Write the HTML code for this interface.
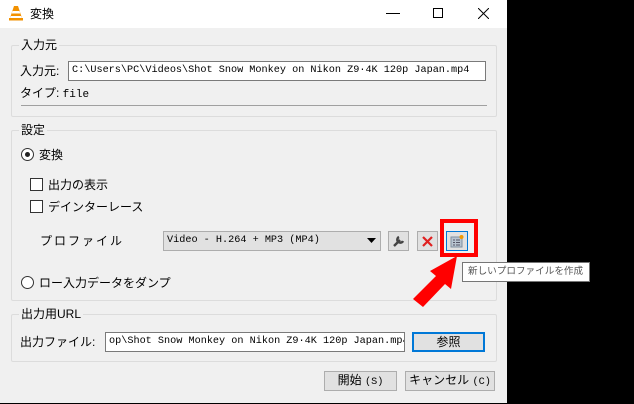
<!DOCTYPE html>
<html><head><meta charset="utf-8"><style>
*{box-sizing:border-box;margin:0;padding:0}
body{width:634px;height:404px;background:#000;position:relative;overflow:hidden;font-family:"Liberation Sans","Noto Sans CJK JP",sans-serif;font-size:12px;color:#000}
.win{position:absolute;left:0;top:0;width:507px;height:403px;background:#f0f0f0}
.title{position:absolute;left:0;top:0;width:507px;height:28px;background:#fff}
.a{position:absolute;white-space:nowrap;line-height:14px}
.grp{position:absolute;border:1px solid #dcdcdc;border-radius:2px}
.gl{position:absolute;background:#f0f0f0;padding:0 2px;line-height:14px}
.mono{font-family:"Liberation Mono","Noto Sans CJK JP",monospace;font-size:10.2px}
.field{position:absolute;background:#fff;border:1px solid #7a7a7a;line-height:17px;padding-left:3px;white-space:nowrap;overflow:hidden}
.btn{position:absolute;background:#e1e1e1;border:1px solid #adadad;text-align:center;line-height:17px;white-space:nowrap}
.cb{position:absolute;width:13px;height:13px;border:1px solid #333;background:#fff}
.rb{position:absolute;width:13px;height:13px;border:1px solid #333;border-radius:50%;background:#fff}
</style></head><body>
<div class="win">
<div class="title">
<svg style="position:absolute;left:8px;top:5px" width="16" height="16" viewBox="0 0 16 16"><path d="M6 1h4l4 12H2z" fill="#f29100"/><path d="M4.5 6h7l.8 2.5H3.7zM3 11h10l1 2H2z" fill="#fff"/><rect x="1" y="13" width="14" height="2.5" fill="#f29100"/></svg>
<div class="a" style="left:30px;top:7px">変換</div>
<div class="a" style="left:386px;width:14px;border-top:1px solid #000;top:13px"></div>
<div style="position:absolute;left:433px;top:8px;width:10px;height:10px;border:1px solid #000"></div>
<svg style="position:absolute;left:478px;top:8px" width="11" height="11"><path d="M0 0L11 11M11 0L0 11" stroke="#000" stroke-width="1"/></svg>
</div>

<div class="grp" style="left:11px;top:45px;width:486px;height:72px"></div>
<div class="gl" style="left:19px;top:38px">入力元</div>
<div class="a" style="left:20px;top:64px">入力元:</div>
<div class="field mono" style="left:68px;top:61px;width:418px;height:20px">C:\Users\PC\Videos\Shot Snow Monkey on Nikon Z9·4K 120p Japan.mp4</div>
<div class="a" style="left:20px;top:86px">タイプ: <span class="mono" style="font-size:11px">file</span></div>
<div style="position:absolute;left:21px;top:105px;width:466px;border-top:1px solid #a0a0a0"></div>

<div class="grp" style="left:11px;top:130px;width:486px;height:171px"></div>
<div class="gl" style="left:19px;top:123px">設定</div>
<div class="rb" style="left:21px;top:148px"></div><div style="position:absolute;left:25px;top:152px;width:5px;height:5px;border-radius:50%;background:#222"></div>
<div class="a" style="left:39px;top:148px">変換</div>
<div class="cb" style="left:30px;top:178px"></div>
<div class="a" style="left:48px;top:178px">出力の表示</div>
<div class="cb" style="left:30px;top:200px"></div>
<div class="a" style="left:48px;top:200px">デインターレース</div>
<div class="a" style="left:40px;top:234px;letter-spacing:2px">プロファイル</div>
<div class="btn mono" style="left:163px;top:231px;width:218px;height:20px;text-align:left;padding-left:3px">Video - H.264 + MP3 (MP4)</div>
<svg style="position:absolute;left:367px;top:238px" width="9" height="6"><path d="M0 0H9L4.5 5z" fill="#000"/></svg>
<div class="btn" style="left:388px;top:231px;width:21px;height:20px"></div>
<svg style="position:absolute;left:392px;top:234px" width="14" height="14" viewBox="0 0 14 14"><path d="M2 12L8 6M7 3a3 3 0 1 0 4 4" stroke="#444" stroke-width="2.4" fill="none"/></svg>
<div class="btn" style="left:417px;top:231px;width:21px;height:20px"></div>
<svg style="position:absolute;left:422px;top:236px" width="11" height="11"><path d="M1 1L10 10M10 1L1 10" stroke="#e02020" stroke-width="2.2"/></svg>
<div class="btn" style="left:446px;top:231px;width:22px;height:20px;border-color:#0078d7"></div>
<svg style="position:absolute;left:450px;top:234px" width="14" height="14"><rect x="1" y="3" width="11" height="10" fill="#b8c4d0" stroke="#8090a0"/><path d="M3 6h2M6 6h4M3 8.5h2M6 8.5h4M3 11h2M6 11h4" stroke="#556"/><circle cx="11.5" cy="3" r="2" fill="#f39a00"/></svg>
<div style="position:absolute;left:440px;top:219px;width:38px;height:38px;border:4px solid #f00"></div>
<div class="rb" style="left:21px;top:276px"></div>
<div class="a" style="left:39px;top:276px">ロー入力データをダンプ</div>

<div class="grp" style="left:11px;top:314px;width:486px;height:48px"></div>
<div class="gl" style="left:19px;top:307px">出力用URL</div>
<div class="a" style="left:20px;top:335px">出力ファイル:</div>
<div class="field mono" style="left:105px;top:332px;width:300px;height:20px">op\Shot Snow Monkey on Nikon Z9·4K 120p Japan.mp4</div>
<div class="btn" style="left:412px;top:332px;width:73px;height:20px;border:2px solid #0078d7;line-height:16px">参照</div>

<div class="btn" style="left:324px;top:371px;width:73px;height:20px">開始 <span class="mono">(S)</span></div>
<div class="btn" style="left:405px;top:371px;width:90px;height:20px">キャンセル <span class="mono">(C)</span></div>
</div>
<div style="position:absolute;left:462px;top:262px;width:128px;height:20px;background:#fff;border:1px solid #767676;color:#555;line-height:18px;padding-left:5px;white-space:nowrap;font-size:9.6px;overflow:hidden">新しいプロファイルを作成</div>
<svg style="position:absolute;left:0;top:0" width="634" height="404"><polygon points="457,256 430,271 436,276 413,299 423,307 445,284 451,289" fill="#f00"/></svg>
</body></html>
